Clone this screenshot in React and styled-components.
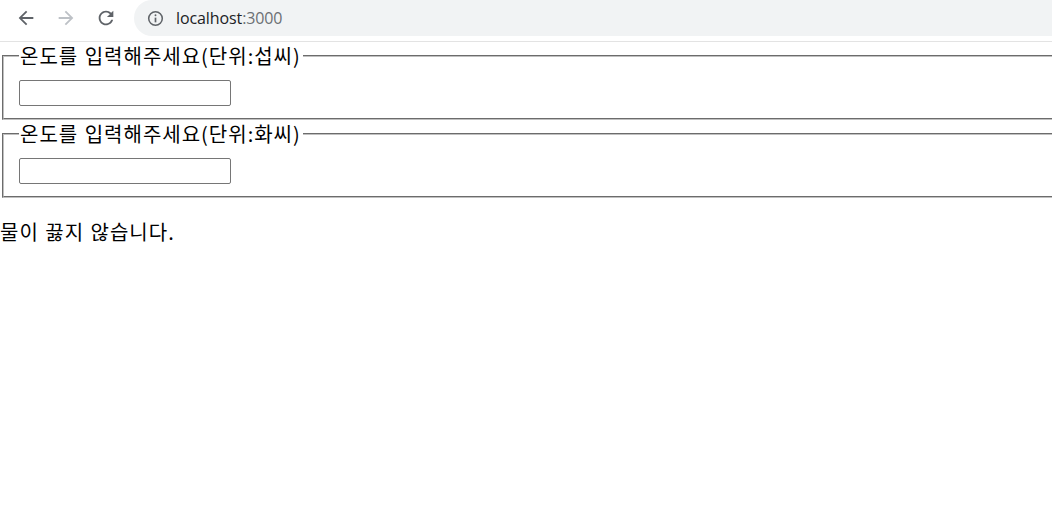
import styled, { createGlobalStyle } from "styled-components";

const GlobalStyle = createGlobalStyle`
	html, body {
		margin: 0;
		background: #fff;
		overflow: hidden;
	}

	body {
		font-family: "Noto Sans CJK KR", "Noto Sans", sans-serif;
		color: #000;
	}
`;

const Toolbar = styled.header`
	align-items: center;
	border-bottom: 1px solid #e3e3e3;
	display: flex;
	height: 41px;
	overflow: hidden;
`;

const NavButton = styled.span`
	align-items: center;
	color: ${(props) => (props.disabled ? "#bdc1c6" : "#5f6368")};
	display: flex;
	height: 36px;
	justify-content: center;
	margin-top: -5px;
	width: 40px;

	&:first-child {
		margin-left: 6px;
	}
`;

const AddressBar = styled.div`
	align-items: center;
	background: #f1f3f4;
	border-radius: 18px;
	display: flex;
	flex: 1;
	height: 36px;
	margin: -5px -40px 0 8px;
	padding-left: 13px;
`;

const InfoIcon = styled.svg`
	color: #5f6368;
	margin-right: 12px;
`;

const Url = styled.span`
	color: #202124;
	font-family: "Open Sans", "Noto Sans", sans-serif;
	font-size: 16px;
	letter-spacing: -0.1px;
`;

const Port = styled.span`
	color: #6b6f73;
`;

const Page = styled.main`
	font-size: 20px;
	letter-spacing: 1px;
	word-spacing: 1px;
`;

const FieldSet = styled.fieldset`
	border: 2px groove #c0c0c0;
	margin: 0 -12px 0 2px;
	padding: 11px 15px 12px;
`;

const Legend = styled.legend`
	line-height: 27px;
	padding: 0 2px 0 1px;
`;

const TempInput = styled.input`
	border: 1px solid #767676;
	border-radius: 2px;
	box-sizing: border-box;
	display: block;
	height: 26px;
	margin: 0;
	width: 212px;
`;

const Verdict = styled.p`
	line-height: 27px;
	margin: 20px 0 0;
`;

const BackIcon = () => (
	<svg width="22" height="22" viewBox="0 0 24 24" fill="currentColor">
		<path d="M20 11H7.83l5.59-5.59L12 4l-8 8 8 8 1.41-1.41L7.83 13H20v-2z" />
	</svg>
);

const ForwardIcon = () => (
	<svg width="22" height="22" viewBox="0 0 24 24" fill="currentColor">
		<path d="M12 4l-1.41 1.41L16.17 11H4v2h12.17l-5.58 5.59L12 20l8-8z" />
	</svg>
);

const ReloadIcon = () => (
	<svg width="22" height="22" viewBox="0 0 24 24" fill="currentColor">
		<path d="M17.65 6.35C16.2 4.9 14.21 4 12 4c-4.42 0-7.99 3.58-7.99 8s3.57 8 7.99 8c3.73 0 6.84-2.55 7.73-6h-2.08c-.82 2.33-3.04 4-5.65 4-3.31 0-6-2.69-6-6s2.69-6 6-6c1.66 0 3.14.69 4.22 1.78L13 11h7V4l-2.35 2.35z" />
	</svg>
);

const TemperatureField = ({ scale }) => (
	<FieldSet>
		<Legend>온도를 입력해주세요(단위:{scale})</Legend>
		<TempInput type="text" />
	</FieldSet>
);

const App = () => (
	<>
		<GlobalStyle />
		<Toolbar>
			<NavButton>
				<BackIcon />
			</NavButton>
			<NavButton disabled>
				<ForwardIcon />
			</NavButton>
			<NavButton>
				<ReloadIcon />
			</NavButton>
			<AddressBar>
				<InfoIcon width="17" height="17" viewBox="0 0 20 20" fill="none" stroke="currentColor">
					<circle cx="10" cy="10" r="8" strokeWidth="1.8" />
					<line x1="10" y1="9" x2="10" y2="14.5" strokeWidth="2" />
					<circle cx="10" cy="6.2" r="1.1" fill="currentColor" stroke="none" />
				</InfoIcon>
				<Url>
					localhost<Port>:3000</Port>
				</Url>
			</AddressBar>
		</Toolbar>
		<Page>
			<TemperatureField scale="섭씨" />
			<TemperatureField scale="화씨" />
			<Verdict>물이 끓지 않습니다.</Verdict>
		</Page>
	</>
);

export default App;
